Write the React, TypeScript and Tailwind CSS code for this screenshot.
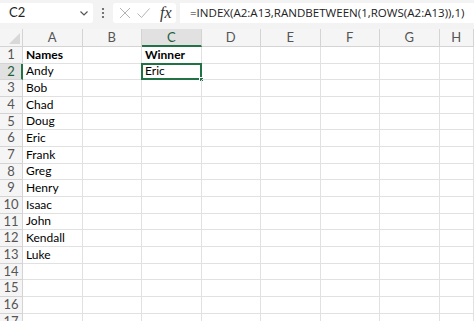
import React from "react";

const names = ["Names", "Andy", "Bob", "Chad", "Doug", "Eric", "Frank", "Greg", "Henry", "Isaac", "John", "Kendall", "Luke"];
const cols = ["A", "B", "C", "D", "E", "F", "G", "H"];
const rows = Array.from({ length: 17 }, (_, i) => i + 1);

const font = { fontFamily: 'Lato, "Open Sans", sans-serif' };

const Toolbar = () => (
  <div className="flex h-[29px] items-start bg-[#f3f3f3] pt-[3px]">
    <div className="flex h-[20px] w-[93px] shrink-0 items-center justify-between rounded-r-[3px] bg-white pl-[9px] pr-[3px] text-[13px] text-[#222]">
      <span>C2</span>
      <svg width="12" height="12" viewBox="0 0 12 12" fill="none" stroke="#555" strokeWidth="1.2">
        <path d="M2.5 4.5 6 8l3.5-3.5" />
      </svg>
    </div>
    <div className="flex w-[20px] shrink-0 items-center justify-center pt-[4px]">
      <svg width="4" height="12" viewBox="0 0 4 12" fill="#555">
        <circle cx="2" cy="2" r="1.1" />
        <circle cx="2" cy="6" r="1.1" />
        <circle cx="2" cy="10" r="1.1" />
      </svg>
    </div>
    <div className="flex h-[20px] w-[63px] shrink-0 items-center rounded-[3px] bg-white pl-[5px]">
      <svg width="14" height="14" viewBox="0 0 14 14" fill="none" stroke="#b4b4b4" strokeWidth="1">
        <path d="M2 2l10 10M12 2 2 12" />
      </svg>
      <svg className="ml-[4px]" width="15" height="14" viewBox="0 0 15 14" fill="none" stroke="#b4b4b4" strokeWidth="1">
        <path d="M1.5 7.5 5.5 11.5 13.5 2.5" />
      </svg>
      <span
        className="ml-[9px] text-[16px] italic leading-none text-[#333]"
        style={{ fontFamily: '"Liberation Serif", "DejaVu Serif", serif' }}
      >
        fx
      </span>
    </div>
    <div
      className="ml-[4px] flex h-[20px] min-w-0 flex-1 items-center overflow-hidden whitespace-nowrap bg-white pl-[10px] text-[11.55px] text-[#222]"
      style={{ fontFamily: '"Open Sans", sans-serif' }}
    >
      =INDEX(A2:A13,RANDBETWEEN(1,ROWS(A2:A13)),1)
    </div>
  </div>
);

export default function App() {
  return (
    <div className="h-[321px] w-[474px] overflow-hidden bg-white" style={font}>
      <Toolbar />
      <div className="grid grid-cols-[23px_repeat(7,59.5px)_1fr]">
        {/* header row */}
        <div className="relative h-[18px] border-b border-r border-[#d4d4d4] bg-[#f5f5f5]">
          <svg className="absolute bottom-[2px] right-[2px]" width="11" height="11" viewBox="0 0 11 11">
            <path d="M11 0v11H0z" fill="#d8d8d8" />
          </svg>
        </div>
        {cols.map((c) => (
          <div
            key={c}
            className={
              c === "C"
                ? "flex h-[18px] items-center justify-center border-b-2 border-r border-b-[#217346] border-r-[#d4d4d4] bg-[#e1e1e1] pt-[1px] text-[13px] text-[#1e5e3a]"
                : "flex h-[18px] items-center justify-center border-b border-r border-[#d4d4d4] bg-[#f5f5f5] text-[13px] text-[#555]"
            }
          >
            {c}
          </div>
        ))}
        {rows.map((r) => (
          <React.Fragment key={r}>
            <div
              className={
                r === 2
                  ? "flex h-[16.67px] items-center justify-center border-b border-r-2 border-b-[#d4d4d4] border-r-[#217346] bg-[#e1e1e1] pl-[1px] text-[13px] text-[#1e5e3a]"
                  : "flex h-[16.67px] items-center justify-center border-b border-r border-[#d4d4d4] bg-[#f5f5f5] text-[13px] text-[#555]"
              }
            >
              {r}
            </div>
            {cols.map((c) => {
              const val = c === "A" ? names[r - 1] : c === "C" && r === 1 ? "Winner" : c === "C" && r === 2 ? "Eric" : "";
              const bold = r === 1 && (c === "A" || c === "C");
              return (
                <div
                  key={c}
                  className={
                    "relative flex h-[16.67px] items-center border-b border-r border-[#e1e1e1] pl-[3px] text-[12px] text-black" +
                    (bold ? " font-bold" : "")
                  }
                >
                  {val}
                  {c === "C" && r === 2 && (
                    <>
                      <div className="pointer-events-none absolute -left-[1px] -top-[1px] bottom-[-1px] right-[-1px] border-2 border-[#217346]" />
                      <div className="absolute -bottom-[3px] -right-[3px] h-[5px] w-[5px] border border-white bg-[#217346]" />
                    </>
                  )}
                </div>
              );
            })}
          </React.Fragment>
        ))}
      </div>
    </div>
  );
}
